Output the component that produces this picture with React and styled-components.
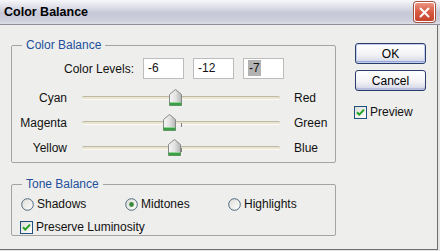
import React from 'react'
import styled, { createGlobalStyle } from 'styled-components'

const GlobalStyle = createGlobalStyle`
  html, body {
    margin: 0;
    padding: 0;
    background: #e4e4e4;
  }
  body {
    font-family: "Liberation Sans", Arial, sans-serif;
    font-size: 12px;
    color: #111;
  }
`

const Window = styled.div`
  width: 440px;
  height: 251px;
  display: flex;
  flex-direction: column;
  background: #e6e6e6;
  overflow: hidden;
`

const TitleBar = styled.div`
  flex: none;
  height: 24px;
  display: flex;
  align-items: center;
  justify-content: space-between;
  padding: 0 5px 0 4px;
  background: linear-gradient(#f7f7f9 0%, #e6e7ee 20%, #c6c8d7 55%, #cdd0dc 85%, #dcdde6 100%);
  border-bottom: 1px solid #8d8f9c;
`

const Title = styled.span`
  font-weight: bold;
  font-size: 12.5px;
  color: #000;
`

const CloseButton = styled.div`
  width: 19px;
  height: 18px;
  border: 1px solid #fff;
  border-radius: 3px;
  box-shadow: 0 0 0 1px #a8503e;
  background: linear-gradient(#ec9480, #d85a42 50%, #c4432c);
  display: flex;
  align-items: center;
  justify-content: center;
`

const Body = styled.div`
  flex: 1;
  display: flex;
  padding: 13px 0 0 11px;
  margin: 0 2px 1px 0;
  background: #eeeeec;
  border-right: 1px solid #6e6e6e;
  border-bottom: 1px solid #6e6e6e;
`

const LeftColumn = styled.div`
  width: 325px;
  display: flex;
  flex-direction: column;
`

const RightColumn = styled.div`
  margin-left: 18px;
  padding-top: 5px;
  display: flex;
  flex-direction: column;
`

const Group = styled.fieldset`
  margin: 0 0 ${p => p.$gap || 0}px 0;
  padding: 0 0 ${p => p.$pb || 0}px 0;
  min-width: 0;
  border: 1px solid #a4a4a4;
  border-radius: 2px;
`

const Legend = styled.legend`
  margin-left: 10px;
  padding: 0 4px;
  line-height: 14px;
  color: #22509c;
`

const LevelsRow = styled.div`
  display: flex;
  align-items: center;
  gap: 9px;
  margin-top: 6px;
  padding-left: 52px;
  margin-bottom: 6px;
`

const Field = styled.div`
  width: 41px;
  height: 21px;
  box-sizing: border-box;
  border: 1px solid #bcbcbc;
  background: #fff;
  padding-left: 4px;
  line-height: 19px;
`

const Selected = styled.span`
  background: #b2b2b2;
  padding: 1px 1px;
`

const SliderRow = styled.div`
  display: flex;
  align-items: center;
  height: 25px;
`

const LeftLabel = styled.span`
  width: 55px;
  text-align: right;
  margin-right: 15px;
`

const RightLabel = styled.span`
  margin-left: 14px;
`

const Slider = styled.div`
  position: relative;
  width: 198px;
  height: 25px;
  display: flex;
  align-items: center;
`

const Rail = styled.div`
  width: 100%;
  height: 2px;
  border-top: 1px solid #bdb9a4;
  border-bottom: 1px solid #fbfaf3;
  background: #e9e5d2;
  border-radius: 2px;
`

const Tick = styled.div`
  position: absolute;
  left: 99px;
  top: 13px;
  width: 1px;
  height: 4px;
  background: #7e7e7e;
`

const Thumb = styled.svg`
  position: absolute;
  top: 50%;
  margin-top: -9px;
  margin-left: -6.5px;
`

const ToneRow = styled.div`
  display: grid;
  grid-template-columns: 104px 103px auto;
  margin-top: 5px;
  padding-left: 9px;
  height: 16px;
  align-items: center;
`

const CheckRow = styled.div`
  display: flex;
  align-items: center;
  gap: 3px;
  height: 16px;
  margin-top: ${p => p.$top || 0}px;
  padding-left: ${p => p.$indent || 0}px;
`

const Option = styled.label`
  display: flex;
  align-items: center;
  gap: 3px;
`

const Button = styled.div`
  width: 71px;
  height: 21px;
  box-sizing: border-box;
  margin: 0 0 ${p => p.$gap || 0}px 1px;
  border: 1px solid #2c3c6a;
  border-radius: 3px;
  background: linear-gradient(#ffffff, #f3f3f6 55%, #dcdeea 85%, #c6cade);
  box-shadow: ${p => (p.$default ? 'inset 0 0 0 1px #c2cef0, inset 0 -2px 0 0 #98a8dc' : 'inset 0 -2px 0 0 #b6bedc')};
  display: flex;
  align-items: center;
  justify-content: center;
  color: #000;
`

const CheckBox = () => (
  <svg width="13" height="13" viewBox="0 0 13 13">
    <defs>
      <linearGradient id="cbg" x1="0" y1="0" x2="1" y2="1">
        <stop offset="0" stopColor="#dcdcd6" />
        <stop offset="1" stopColor="#ffffff" />
      </linearGradient>
    </defs>
    <rect x="0.5" y="0.5" width="12" height="12" fill="url(#cbg)" stroke="#1f4f7e" />
    <path d="M3 6.2 L5.3 8.6 L10 3.6" fill="none" stroke="#22a222" strokeWidth="2" />
  </svg>
)

const Radio = ({ checked }) => (
  <svg width="13" height="13" viewBox="0 0 13 13">
    <defs>
      <linearGradient id="rbg" x1="0" y1="0" x2="1" y2="1">
        <stop offset="0" stopColor="#dcdcd6" />
        <stop offset="1" stopColor="#ffffff" />
      </linearGradient>
    </defs>
    <circle cx="6.5" cy="6.5" r="5.8" fill="url(#rbg)" stroke="#4b6783" />
    {checked && <circle cx="6.5" cy="6.5" r="2.4" fill="#3c8c3c" />}
  </svg>
)

const ThumbIcon = ({ value }) => (
  <Thumb width="13" height="17" viewBox="0 0 13 17" style={{ left: ((value + 100) / 200) * 198 }}>
    <defs>
      <linearGradient id="tbg" x1="0" y1="0" x2="1" y2="0">
        <stop offset="0" stopColor="#f6f6f6" />
        <stop offset="0.5" stopColor="#e2e2e2" />
        <stop offset="1" stopColor="#b4b4b4" />
      </linearGradient>
    </defs>
    <path d="M6.5 0.5 L12.5 5.5 L12.5 16.5 L0.5 16.5 L0.5 5.5 Z" fill="url(#tbg)" stroke="#868a86" />
    <rect x="0.5" y="13.5" width="12" height="3" fill="#3aa046" />
    <rect x="1.5" y="13" width="10" height="1" fill="#8fd494" />
  </Thumb>
)

const sliders = [
  { left: 'Cyan', right: 'Red', value: -6 },
  { left: 'Magenta', right: 'Green', value: -12 },
  { left: 'Yellow', right: 'Blue', value: -7 },
]

const App = () => (
  <Window>
    <GlobalStyle />
    <TitleBar>
      <Title>Color Balance</Title>
      <CloseButton>
        <svg width="11" height="11" viewBox="0 0 11 11">
          <path d="M1.5 1.5 L9.5 9.5 M9.5 1.5 L1.5 9.5" stroke="#fff" strokeWidth="2" strokeLinecap="round" />
        </svg>
      </CloseButton>
    </TitleBar>
    <Body>
      <LeftColumn>
        <Group $gap={14} $pb={2}>
          <Legend>Color Balance</Legend>
          <LevelsRow>
            <span>Color Levels:</span>
            <Field>-6</Field>
            <Field>-12</Field>
            <Field><Selected>-7</Selected></Field>
          </LevelsRow>
          {sliders.map(s => (
            <SliderRow key={s.left}>
              <LeftLabel>{s.left}</LeftLabel>
              <Slider>
                <Rail />
                <Tick />
                <ThumbIcon value={s.value} />
              </Slider>
              <RightLabel>{s.right}</RightLabel>
            </SliderRow>
          ))}
        </Group>
        <Group>
          <Legend>Tone Balance</Legend>
          <ToneRow>
            <Option><Radio />Shadows</Option>
            <Option><Radio checked />Midtones</Option>
            <Option><Radio />Highlights</Option>
          </ToneRow>
          <CheckRow $top={7} $indent={8}>
            <CheckBox />
            <span>Preserve Luminosity</span>
          </CheckRow>
        </Group>
      </LeftColumn>
      <RightColumn>
        <Button $default $gap={6}>OK</Button>
        <Button $gap={13}>Cancel</Button>
        <CheckRow>
          <CheckBox />
          <span>Preview</span>
        </CheckRow>
      </RightColumn>
    </Body>
  </Window>
)

export default App
